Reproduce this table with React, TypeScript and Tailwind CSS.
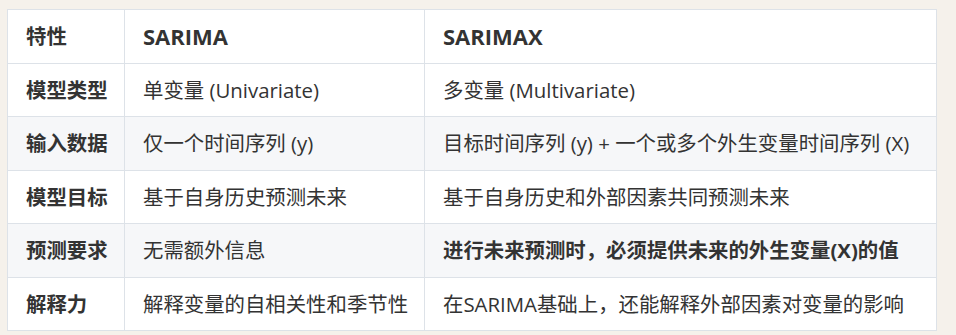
import React from "react";

const rows: { k: string; a: string; b: string; bBold?: boolean }[] = [
  { k: "模型类型", a: "单变量 (Univariate)", b: "多变量 (Multivariate)" },
  { k: "输入数据", a: "仅一个时间序列 (y)", b: "目标时间序列 (y) + 一个或多个外生变量时间序列 (X)" },
  { k: "模型目标", a: "基于自身历史预测未来", b: "基于自身历史和外部因素共同预测未来" },
  { k: "预测要求", a: "无需额外信息", b: "进行未来预测时，必须提供未来的外生变量(X)的值", bBold: true },
  { k: "解释力", a: "解释变量的自相关性和季节性", b: "在SARIMA基础上，还能解释外部因素对变量的影响" },
];

export default function App() {
  return (
    <div
      className="w-[956px] h-[335px] bg-[#f5f1eb] pl-[7px] pt-[9px] text-[20.4px] text-[#333333]"
      style={{ fontFamily: '"Open Sans", "Noto Sans CJK SC", sans-serif' }}
    >
      <table className="w-[929px] border-collapse table-fixed bg-white">
        <colgroup>
          <col className="w-[117px]" />
          <col className="w-[300px]" />
          <col className="w-[512px]" />
        </colgroup>
        <thead>
          <tr className="h-[53.5px]">
            <th className="border border-[#dde2e8] px-[18px] text-left font-bold leading-[30px]">特性</th>
            <th className="border border-[#dde2e8] px-[18px] text-left font-bold leading-[30px] text-[22px]">SARIMA</th>
            <th className="border border-[#dde2e8] px-[18px] text-left font-bold leading-[30px] text-[22px]">SARIMAX</th>
          </tr>
        </thead>
        <tbody>
          {rows.map((r, i) => (
            <tr key={r.k} className={i % 2 === 1 ? "h-[53.5px] bg-[#f6f7f9]" : "h-[53.5px] bg-white"}>
              <td className="border border-[#dde2e8] px-[18px] font-bold leading-[30px] whitespace-nowrap">{r.k}</td>
              <td className="border border-[#dde2e8] px-[18px] leading-[30px] whitespace-nowrap">{r.a}</td>
              <td
                className={
                  r.bBold
                    ? "border border-[#dde2e8] px-[18px] font-bold leading-[30px] whitespace-nowrap"
                    : "border border-[#dde2e8] px-[18px] leading-[30px] whitespace-nowrap"
                }
              >
                {r.b}
              </td>
            </tr>
          ))}
        </tbody>
      </table>
    </div>
  );
}
